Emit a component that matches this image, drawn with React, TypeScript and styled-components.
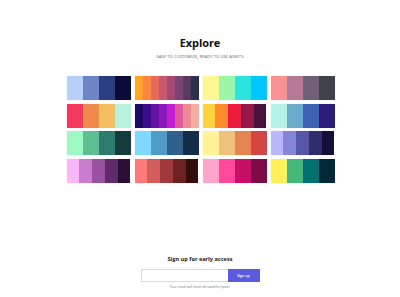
import React from "react";
import styled, { createGlobalStyle } from "styled-components";

const Global = createGlobalStyle`
  html, body { margin: 0; padding: 0; background: #ffffff; }
  body { font-family: "Open Sans", "Noto Sans", sans-serif; }
`;

const Page = styled.div`
  width: 400px;
  height: 297px;
  display: flex;
  flex-direction: column;
  align-items: center;
  overflow: hidden;
`;

const Title = styled.h1`
  margin: 36px 0 0;
  font-size: 11px;
  line-height: 14px;
  font-weight: 700;
  color: #111111;
  letter-spacing: -0.1px;
`;

const Subtitle = styled.p`
  margin: 4px 0 0;
  font-size: 4px;
  line-height: 5px;
  letter-spacing: 0.12px;
  color: #555555;
  text-transform: uppercase;
`;

const Grid = styled.div`
  margin: 17px 0 0 1px;
  display: grid;
  grid-template-columns: repeat(4, 64px);
  grid-auto-rows: 24px;
  column-gap: 4px;
  row-gap: 3.5px;
`;

const Palette = styled.div`
  display: flex;
  box-shadow: 0 0 1px rgba(0, 0, 0, 0.15);
`;

const Swatch = styled.div<{ $c: string }>`
  flex: 1;
  background: ${(p) => p.$c};
`;

const Signup = styled.section`
  margin-top: auto;
  margin-bottom: 8px;
  display: flex;
  flex-direction: column;
  align-items: center;
`;

const SignupTitle = styled.h2`
  margin: 0;
  font-size: 5.6px;
  line-height: 7px;
  font-weight: 700;
  color: #1a1a1a;
`;

const Form = styled.form`
  margin-top: 6px;
  display: flex;
  height: 13px;
`;

const Input = styled.input`
  box-sizing: border-box;
  width: 87px;
  height: 13px;
  border: 1px solid #d9d4fb;
  border-right: none;
  outline: none;
  padding: 0 3px;
  font-size: 4px;
  background: #ffffff;
`;

const Button = styled.button`
  width: 32px;
  height: 13px;
  border: none;
  padding: 0;
  background: #5b5be0;
  color: #ffffff;
  font-family: "Open Sans", sans-serif;
  font-size: 3.6px;
  font-weight: 600;
`;

const Note = styled.p`
  margin: 3px 0 0;
  font-size: 3.3px;
  line-height: 4px;
  color: #777777;
`;

const palettes: string[][] = [
  ["#b6d0f7", "#6d85c7", "#2c3e80", "#0b0b3a"],
  ["#ffa62b", "#fb8640", "#e56b5a", "#c9586d", "#a34a72", "#7d4370", "#573b60", "#2e2f48"],
  ["#fff68f", "#9ef5a8", "#2de3dd", "#00c8ff"],
  ["#f99393", "#b57a93", "#6f6077", "#40424b"],
  ["#f4375e", "#f08a4b", "#f1bd5e", "#b8f2de"],
  ["#1a0a63", "#3b0c8a", "#6512a6", "#8c17b9", "#c31cd6", "#e25a9e", "#ee8995", "#f4aea4"],
  ["#ffd23f", "#ff8c2a", "#ee1c3c", "#96164a", "#4a0f3b"],
  ["#b5f2e8", "#6aabcb", "#3d62b5", "#2b1b7a"],
  ["#a0f7c3", "#5ebf95", "#2e7c6c", "#133d3d"],
  ["#7fd8fd", "#4e9cc9", "#2e608e", "#142e4a"],
  ["#fef396", "#f0c17c", "#e2854f", "#d44444"],
  ["#b9b9f9", "#8686d6", "#5656a8", "#2f2d6c", "#130f3a"],
  ["#f9b7f5", "#c97dce", "#9a52a0", "#612a6c", "#2b0e35"],
  ["#ff7b7a", "#d35c5c", "#a03a3a", "#6d2121", "#350c0c"],
  ["#ffa4cb", "#ff4a9c", "#c80f67", "#7f0a47"],
  ["#fff05a", "#48b77b", "#017070", "#02283a"],
];

export default function App() {
  return (
    <>
      <Global />
      <Page>
        <Title>Explore</Title>
        <Subtitle>Easy to customize, ready to use assets</Subtitle>
        <Grid>
          {palettes.map((p, i) => (
            <Palette key={i}>
              {p.map((c, j) => (
                <Swatch key={j} $c={c} />
              ))}
            </Palette>
          ))}
        </Grid>
        <Signup>
          <SignupTitle>Sign up for early access</SignupTitle>
          <Form onSubmit={(e) => e.preventDefault()}>
            <Input type="email" aria-label="Email" />
            <Button type="submit">Sign up</Button>
          </Form>
          <Note>Your email will never be used for spam.</Note>
        </Signup>
      </Page>
    </>
  );
}
